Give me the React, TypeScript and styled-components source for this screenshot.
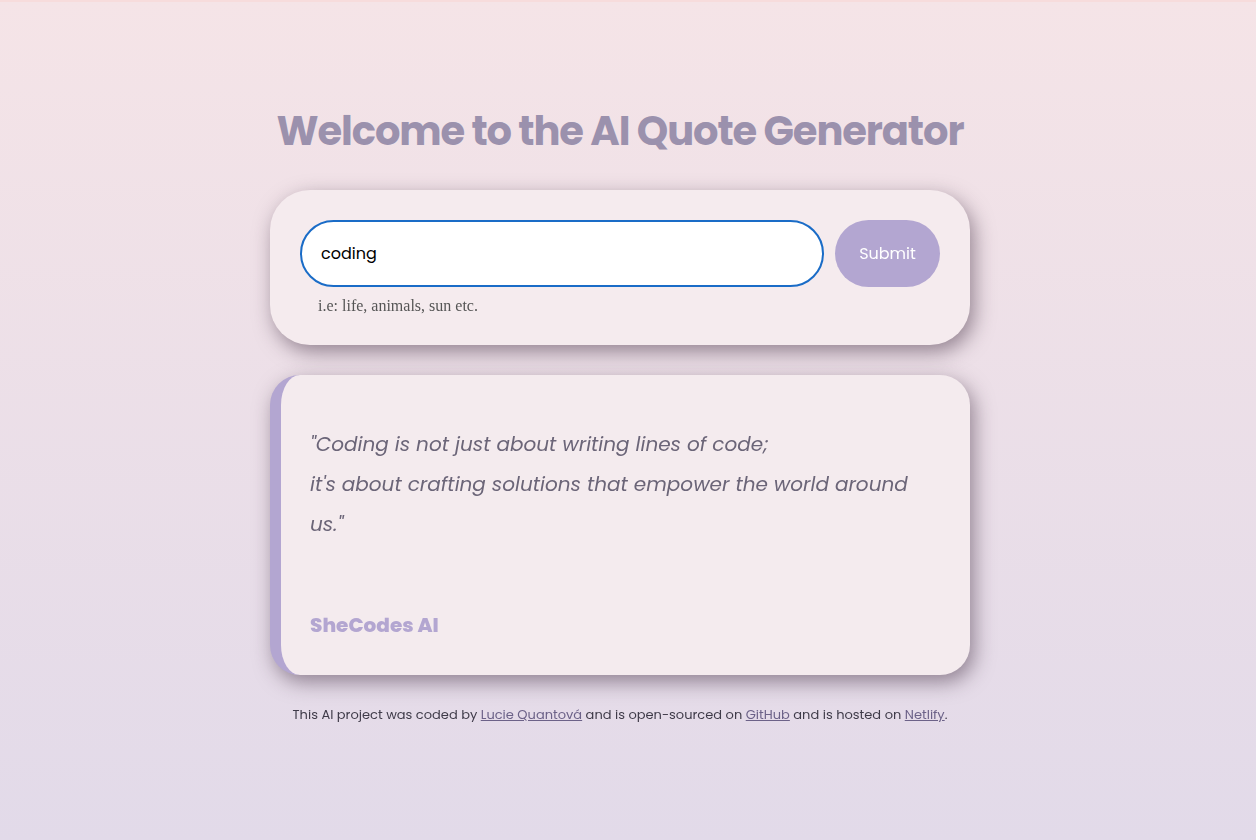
import React from "react";
import styled, { createGlobalStyle } from "styled-components";

const Global = createGlobalStyle`
  html, body { margin: 0; padding: 0; }
  html {
    background: linear-gradient(180deg, #f5e4e7 0%, #e2dae9 100%);
    min-height: 100%;
  }
  body {
    box-sizing: border-box;
    border-top: 2px solid #f7dcdc;
    padding-right: 16px;
    font-family: "Poppins", "Inter", "Liberation Sans", sans-serif;
  }
`;

const Page = styled.div`
  width: 700px;
  margin: 0 auto;
  padding-top: 104px;
  display: flex;
  flex-direction: column;
`;

const Title = styled.h1`
  margin: 0 0 34px;
  text-align: center;
  white-space: nowrap;
  font-size: 40px;
  line-height: 50px;
  font-weight: 700;
  letter-spacing: -1.1px;
  color: #9b91ad;
`;

const Card = styled.div`
  background: #f5ebee;
  border-radius: 40px;
  box-shadow: 4px 7px 20px rgba(60, 40, 60, 0.5);
`;

const FormCard = styled(Card)`
  padding: 30px 30px 30px;
  margin-bottom: 30px;
`;

const Row = styled.div`
  display: flex;
  gap: 11px;
`;

const Input = styled.input`
  flex: 1;
  height: 67px;
  box-sizing: border-box;
  border: 2px solid #1a6cc7;
  border-radius: 34px;
  background: #fff;
  padding: 0 19px;
  font-family: inherit;
  font-size: 16px;
  color: #000;
  outline: none;
  caret-color: #000;
`;

const Button = styled.button`
  width: 105px;
  height: 67px;
  border: none;
  border-radius: 34px;
  background: #b3a6d1;
  color: #fff;
  font-family: inherit;
  font-size: 16px;
`;

const Hint = styled.div`
  margin-top: 10px;
  padding-left: 18px;
  font-family: "Liberation Serif", serif;
  font-size: 16px;
  color: #555;
`;

const QuoteCard = styled(Card)`
  border-left: 11px solid #b3a6d1;
  border-radius: 30px;
  padding: 49px 30px 35px 29px;
  height: 300px;
  box-sizing: border-box;
  display: flex;
  flex-direction: column;
  justify-content: space-between;
  background: #f4ebee;
`;

const Quote = styled.p`
  margin: 0;
  font-style: italic;
  font-size: 20px;
  line-height: 40px;
  color: #6b6578;
`;

const Author = styled.div`
  font-weight: 800;
  font-size: 20px;
  color: #b3a6d1;
`;

const Footer = styled.footer`
  margin-top: 30px;
  text-align: center;
  font-size: 13px;
  color: #3f3b49;
`;

const Link = styled.a`
  color: #6c6288;
`;

export default function App() {
  return (
    <>
      <Global />
      <Page>
        <Title>Welcome to the AI Quote Generator</Title>
        <FormCard>
          <Row>
            <Input defaultValue="coding" autoFocus />
            <Button>Submit</Button>
          </Row>
          <Hint>i.e: life, animals, sun etc.</Hint>
        </FormCard>
        <QuoteCard>
          <Quote>
            "Coding is not just about writing lines of code;
            <br />
            it's about crafting solutions that empower the world around us."
          </Quote>
          <Author>SheCodes AI</Author>
        </QuoteCard>
        <Footer>
          This AI project was coded by <Link href="#">Lucie Quantová</Link> and is open-sourced on{" "}
          <Link href="#">GitHub</Link> and is hosted on <Link href="#">Netlify</Link>.
        </Footer>
      </Page>
    </>
  );
}
